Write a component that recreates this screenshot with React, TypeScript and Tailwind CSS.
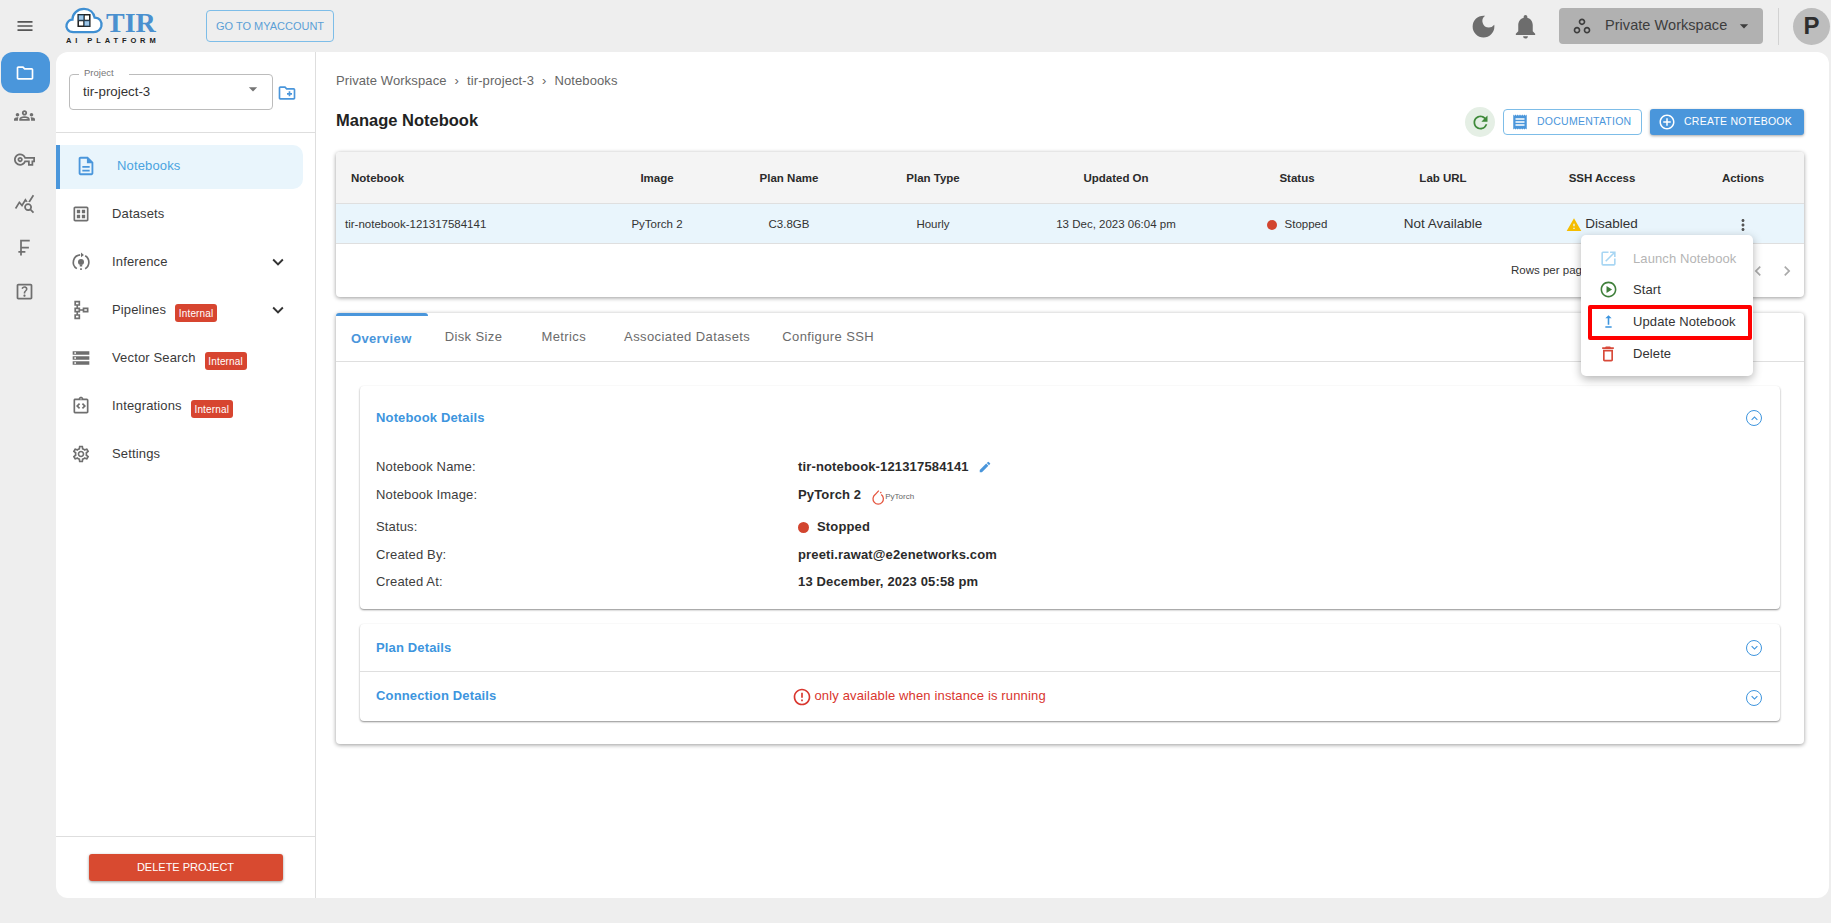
import type { ReactNode } from "react"
import {
  MdAddCircleOutline, MdChevronLeft, MdChevronRight, MdOutlineCreateNewFolder, MdDarkMode, MdEdit, MdErrorOutline,
  MdExpandLess, MdExpandMore, MdMenu, MdMoreVert, MdNotifications, MdOutlineCurrencyFranc, MdOutlineDataset,
  MdOutlineDelete, MdOutlineDescription, MdOutlineFolder, MdOutlineGroups, MdOutlineHelpCenter,
  MdOutlineIntegrationInstructions, MdOutlineOpenInNew, MdOutlinePlayCircle,
  MdOutlineQueryStats, MdOutlineSchema, MdOutlineSettings, MdOutlineStorage, MdOutlineUpgrade, MdOutlineVpnKey,
  MdOutlineWorkspaces, MdReceipt, MdRefresh, MdArrowDropDown, MdWarning,
} from "react-icons/md"

const railIcons = [MdOutlineGroups, MdOutlineVpnKey, MdOutlineQueryStats, MdOutlineCurrencyFranc, MdOutlineHelpCenter]

const InferenceIcon = () => (
  <svg viewBox="0 0 24 24" width={20} height={20} fill="none" stroke="currentColor" strokeWidth="2">
    <path d="M7 20A9 9 0 0 1 11 3.4M17 4.5A9 9 0 0 1 17 20" />
    <path d="M12 .5 15.5 3.6 12 6.4z" fill="currentColor" stroke="none" />
    <circle cx="12" cy="12" r="3.6" fill="currentColor" stroke="none" />
    <path d="M10.5 16.5h3M11 20.5h2" />
  </svg>
)

const Internal = () => (
  <span className="ml-[9px] mt-[6px] flex h-[18px] w-[42px] items-center justify-center rounded-[3px] bg-[#d74530] text-[10px] text-white">
    Internal
  </span>
)

const NavItem = ({ icon, label, badge, chevron }: { icon: ReactNode; label: string; badge?: boolean; chevron?: boolean }) => (
  <div className="flex h-[44px] w-[247px] items-center pb-[2px] text-[13px] tracking-[0.15px] text-[#3a3a3a]">
    <span className="flex w-[56px] justify-center pr-[6px] text-[#6f6f6f]">{icon}</span>
    <span>{label}</span>
    {badge && <Internal />}
    {chevron && <MdExpandMore size={22} className="ml-auto mr-[14px] text-[#333]" />}
  </div>
)

const Detail = ({ label, h, children }: { label: string; h: string; children: ReactNode }) => (
  <div className={`flex items-center text-[13px] tracking-[0.15px] ${h}`}>
    <span className="w-[422px] text-[#3d3d3d]">{label}</span>
    <div className="flex items-center font-bold text-[#2b2b2b]">{children}</div>
  </div>
)

const MenuItem = ({ icon, label, muted, h = "h-[31px]" }: { icon: ReactNode; label: string; muted?: boolean; h?: string }) => (
  <div className={`flex items-center text-[13px] tracking-[0.1px] ${h} ${muted ? "text-[#b5b5b5]" : "text-[#333]"}`}>
    <span className="flex w-[52px] justify-center pl-[2px]">{icon}</span>
    <span>{label}</span>
  </div>
)

export default function App() {
  return (
    <div className="flex h-screen flex-col overflow-hidden bg-[#eeeeee] font-['Liberation_Sans',sans-serif]">
      {/* top bar */}
      <header className="flex h-[52px] shrink-0 items-center">
        <span className="flex w-[50px] justify-center text-[#555]"><MdMenu size={20} /></span>
        <div className="relative ml-[14px] h-[44px] w-[100px]">
          <svg viewBox="0 0 40 28" className="absolute left-0 top-[3px] h-[27px] w-[40px]">
            <path d="M9 26C3 26 1 21 2 18c1-3 3-5 6-5 0-6 5-11 12-11 6 0 10 4 11 9 5 0 8 4 7 9-1 4-4 6-8 6z" fill="#fff" stroke="#3f8fd2" strokeWidth="2.4" />
            <path d="M14 8h12v12H14zM20 8v12M14 14h12" fill="none" stroke="#222" strokeWidth="1.6" />
            <path d="M20 14h6v6h-6zM14 8h6v6h-6z" fill="#3f8fd2" opacity=".5" />
          </svg>
          <span className="absolute left-[42px] top-[4px] font-['Liberation_Serif',serif] text-[28px] font-bold leading-[29px] text-[#4a90cf]">TIR</span>
          <span className="absolute left-[2px] top-[32px] whitespace-nowrap text-[7.5px] font-bold leading-[9px] tracking-[3.9px] text-[#222]">AI PLATFORM</span>
        </div>
        <button className="ml-[42px] h-[32px] w-[128px] rounded-[4px] border border-[#7dbde8] text-[11px] text-[#5b9fd6]">
          GO TO MYACCOUNT
        </button>
        <MdDarkMode size={29} className="ml-auto text-[#6d6d6d]" />
        <MdNotifications size={29} className="ml-[13px] text-[#6d6d6d]" />
        <div className="ml-[19px] flex h-[36px] w-[204px] items-center rounded-[4px] bg-[#b1b1b1] text-[#3d3d3d]">
          <MdOutlineWorkspaces size={20} className="ml-[13px]" />
          <span className="ml-[13px] text-[14.5px] tracking-[0.05px]">Private Workspace</span>
          <MdArrowDropDown size={20} className="ml-[7px]" />
        </div>
        <span className="ml-[15px] h-[37px] w-px bg-[#d2d2d2]" />
        <span className="ml-[14px] mr-[1px] flex h-[37px] w-[37px] items-center justify-center rounded-full bg-[#bdbdbd] text-[24px] font-bold text-[#2e2e2e]">P</span>
      </header>

      <div className="flex min-h-0 flex-1 pb-[25px] pr-[2px]">
        {/* icon rail */}
        <nav className="flex w-[56px] shrink-0 flex-col items-start pl-[1px] text-[#6f6f6f]">
          <span className="flex h-[41px] w-[49px] items-center justify-center rounded-[12px] bg-[#4a96db] pr-[2px] text-white"><MdOutlineFolder size={20} /></span>
          <div className="flex w-[47px] flex-col items-center">
            {railIcons.map((Icon, i) => (
              <span key={i} className="flex h-[44px] items-center"><Icon size={21} /></span>
            ))}
          </div>
        </nav>

        {/* white panel */}
        <div className="relative flex min-w-0 flex-1 rounded-[12px] bg-white">
          <aside className="flex w-[260px] shrink-0 flex-col border-r border-[#dedede]">
            <div className="flex h-[81px] shrink-0 items-start border-b border-[#dedede] pl-[13px] pt-[22px]">
              <div className="relative flex h-[36px] w-[204px] items-center rounded-[4px] border border-[#bcbcbc] pl-[13px] text-[13.3px] text-[#333]">
                <span className="absolute -top-[9px] left-[9px] bg-white pl-[5px] pr-[15px] text-[9.5px] text-[#777]">Project</span>
                tir-project-3
                <MdArrowDropDown size={20} className="absolute right-[9px] top-[4px] text-[#757575]" />
              </div>
              <MdOutlineCreateNewFolder size={20} className="ml-[4px] mt-[9px] text-[#4a96db]" />
            </div>
            <div className="mt-[12px] flex flex-col gap-[4px]">
              <div className="flex h-[44px] w-[247px] items-center rounded-r-[10px] border-l-[4px] border-[#4a96db] bg-[#e9f5fc] pb-[2px] text-[13px] tracking-[0.15px] text-[#4aa3e0]">
                <MdOutlineDescription size={22} className="ml-[15px] text-[#4a96db]" />
                <span className="ml-[20px]">Notebooks</span>
              </div>
              <NavItem icon={<MdOutlineDataset size={20} />} label="Datasets" />
              <NavItem icon={<InferenceIcon />} label="Inference" chevron />
              <NavItem icon={<MdOutlineSchema size={20} />} label="Pipelines" badge chevron />
              <NavItem icon={<MdOutlineStorage size={20} />} label="Vector Search" badge />
              <NavItem icon={<MdOutlineIntegrationInstructions size={20} />} label="Integrations" badge />
              <NavItem icon={<MdOutlineSettings size={20} />} label="Settings" />
            </div>
            <div className="mt-auto flex h-[62px] justify-center border-t border-[#dedede] pt-[17px]">
              <button className="h-[27px] w-[194px] rounded-[3px] bg-[#d84a30] text-[11px] text-white shadow-[0_1px_3px_rgba(0,0,0,0.4)]">
                DELETE PROJECT
              </button>
            </div>
          </aside>

          <main className="min-w-0 flex-1 pl-[20px] pr-[25px]">
            <div className="flex h-[52px] items-center gap-[8px] pt-[6px] text-[13px] tracking-[0.1px] text-[#666]">
              <span>Private Workspace</span><span>›</span><span>tir-project-3</span><span>›</span><span>Notebooks</span>
            </div>
            <div className="flex h-[36px] items-center">
              <h1 className="mt-[-4px] text-[16.5px] font-bold text-[#222]">Manage Notebook</h1>
              <span className="ml-auto flex h-[30px] w-[30px] items-center justify-center rounded-full bg-[#e5efe5] text-[#3f8a3a]"><MdRefresh size={21} /></span>
              <button className="ml-[8px] flex h-[26px] w-[139px] items-center rounded-[4px] border border-[#7dbde8] text-[10.5px] tracking-[0.25px] text-[#4a96db]">
                <MdReceipt size={18} className="ml-[7px]" /><span className="ml-[8px]">DOCUMENTATION</span>
              </button>
              <button className="ml-[8px] flex h-[26px] w-[154px] items-center rounded-[3px] bg-[#4a96db] text-[10.5px] tracking-[0.25px] text-white shadow-[0_1px_3px_rgba(0,0,0,0.35)]">
                <MdAddCircleOutline size={18} className="ml-[8px]" /><span className="ml-[8px]">CREATE NOTEBOOK</span>
              </button>
            </div>

            {/* table card */}
            <section className="relative mt-[12px] h-[145px] rounded-[4px] bg-white shadow-[0_1px_4px_rgba(0,0,0,0.4)]">
              <div className="grid h-[52px] grid-cols-[254px_134px_130px_140px_244px_118px_174px_144px_130px] items-center rounded-t-[4px] border-b border-[#dfdfdf] bg-[#f4f4f4] pt-[2px] text-center text-[11.5px] font-bold text-[#2b2b2b]">
                <span className="pl-[15px] text-left">Notebook</span>
                <span>Image</span><span>Plan Name</span><span className="pl-[18px]">Plan Type</span><span>Updated On</span>
                <span>Status</span><span>Lab URL</span><span>SSH Access</span><span className="pl-[8px]">Actions</span>
              </div>
              <div className="grid h-[40px] grid-cols-[254px_134px_130px_140px_244px_118px_174px_144px_130px] items-center border-b border-[#dfdfdf] bg-[#e9f5fc] pt-[2px] text-center text-[11.5px] text-[#333]">
                <span className="pl-[9px] text-left">tir-notebook-121317584141</span>
                <span>PyTorch 2</span><span>C3.8GB</span><span className="pl-[18px]">Hourly</span><span>13 Dec, 2023 06:04 pm</span>
                <span className="flex items-center justify-center"><i className="mr-[8px] h-[10px] w-[10px] rounded-full bg-[#d2452f]" />Stopped</span>
                <span className="text-[13.5px]">Not Available</span>
                <span className="flex items-center justify-center text-[13.5px]"><MdWarning size={16} className="mr-[3px] text-[#f5bd00]" />Disabled</span>
                <span className="flex justify-center pl-[8px]"><MdMoreVert size={18} className="text-[#555]" /></span>
              </div>
              <div className="flex h-[52px] items-center pl-[1175px] pt-[2px] text-[11.5px] text-[#333]">
                <span>Rows per page</span>
                <MdChevronLeft size={20} className="ml-[160px] text-[#aaa]" />
                <MdChevronRight size={20} className="ml-[9px] text-[#aaa]" />
              </div>
            </section>

            {/* tabs card */}
            <section className="mt-[16px] h-[431px] rounded-[4px] bg-white shadow-[0_1px_4px_rgba(0,0,0,0.4)]">
              <div className="relative flex h-[49px] items-center border-b border-[#dfdfdf] pl-[15px] text-[13px] tracking-[0.4px] text-[#6b6b6b]">
                <span className="absolute left-0 top-0 h-[3px] w-[92px] rounded-t-[3px] bg-[#4a96db]" />
                <span className="mt-[3px] font-bold tracking-[0.35px] text-[#4a96db]">Overview</span>
                <span className="ml-[33px]">Disk Size</span>
                <span className="ml-[39px]">Metrics</span>
                <span className="ml-[38px]">Associated Datasets</span>
                <span className="ml-[32px]">Configure SSH</span>
              </div>
              <div className="px-[24px] pt-[24px]">
                <div className="h-[223px] rounded-[4px] bg-white pl-[16px] pr-[15px] shadow-[0_1px_2px_rgba(0,0,0,0.45)]">
                  <div className="flex h-[64px] items-center text-[13px] font-bold tracking-[0.15px] text-[#3d95de]">
                    Notebook Details
                    <span className="ml-auto mr-[3px] flex h-[16px] w-[16px] items-center justify-center rounded-full border-[1.5px] border-[#3d95de]"><MdExpandLess size={13} /></span>
                  </div>
                  <div className="mt-[3px]">
                    <Detail label="Notebook Name:" h="h-[28px]">
                      tir-notebook-121317584141
                      <MdEdit size={14} className="ml-[9px] text-[#4a96db]" />
                    </Detail>
                    <Detail label="Notebook Image:" h="h-[28px]">
                      PyTorch 2
                      <svg viewBox="0 0 16 20" className="ml-[10px] mt-[4px] h-[16px] w-[14px]">
                        <path d="M9 2 4.5 7a6.5 6.5 0 1 0 7.5 0" fill="none" stroke="#e5553f" strokeWidth="1.6" />
                        <circle cx="11.5" cy="4.5" r="1" fill="#e5553f" />
                      </svg>
                      <span className="mt-[3px] text-[8px] font-normal tracking-normal text-[#666]">PyTorch</span>
                    </Detail>
                    <Detail label="Status:" h="h-[32px] pt-[4px]">
                      <i className="mr-[8px] h-[11px] w-[11px] rounded-full bg-[#d2452f]" />Stopped
                    </Detail>
                    <Detail label="Created By:" h="h-[27px]">preeti.rawat@e2enetworks.com</Detail>
                    <Detail label="Created At:" h="h-[28px]">13 December, 2023 05:58 pm</Detail>
                  </div>
                </div>
                <div className="mt-[15px] rounded-[4px] bg-white pr-[15px] shadow-[0_1px_2px_rgba(0,0,0,0.45)]">
                  <div className="-mr-[15px] flex h-[48px] items-center border-b border-[#dfdfdf] pl-[16px] pr-[15px] text-[13px] font-bold tracking-[0.15px] text-[#3d95de]">
                    Plan Details
                    <span className="ml-auto mr-[3px] flex h-[16px] w-[16px] items-center justify-center rounded-full border-[1.5px] border-[#3d95de]"><MdExpandMore size={13} /></span>
                  </div>
                  <div className="flex h-[49px] items-center pb-[2px] pl-[16px] text-[13px] font-bold tracking-[0.15px] text-[#3d95de]">
                    Connection Details
                    <span className="ml-[296px] flex items-center font-normal text-[#d9362e]">
                      <MdErrorOutline size={20} className="mr-[2px] mt-[2px]" />only available when instance is running
                    </span>
                    <span className="ml-auto mr-[3px] mt-[4px] flex h-[16px] w-[16px] items-center justify-center rounded-full border-[1.5px] border-[#3d95de]"><MdExpandMore size={13} /></span>
                  </div>
                </div>
              </div>
            </section>
          </main>

          {/* row actions menu */}
          <div className="absolute left-[1525px] top-[183px] w-[172px] rounded-[5px] bg-white py-[8px] shadow-[0_3px_10px_rgba(0,0,0,0.3)]">
            <MenuItem icon={<MdOutlineOpenInNew size={19} className="text-[#a8d6f3]" />} label="Launch Notebook" muted />
            <MenuItem icon={<MdOutlinePlayCircle size={19} className="text-[#3f7f3a]" />} label="Start" />
            <div className="ml-[7px] w-[164px] rounded-[2px] border-[4px] border-[#f00]">
              <div className="-ml-[11px] pb-[2px]">
                <MenuItem h="h-[25px]" icon={<MdOutlineUpgrade size={19} className="text-[#3d95de]" />} label="Update Notebook" />
              </div>
            </div>
            <MenuItem h="h-[28px]" icon={<MdOutlineDelete size={20} className="text-[#d84a3a]" />} label="Delete" />
          </div>
        </div>
      </div>
    </div>
  )
}
